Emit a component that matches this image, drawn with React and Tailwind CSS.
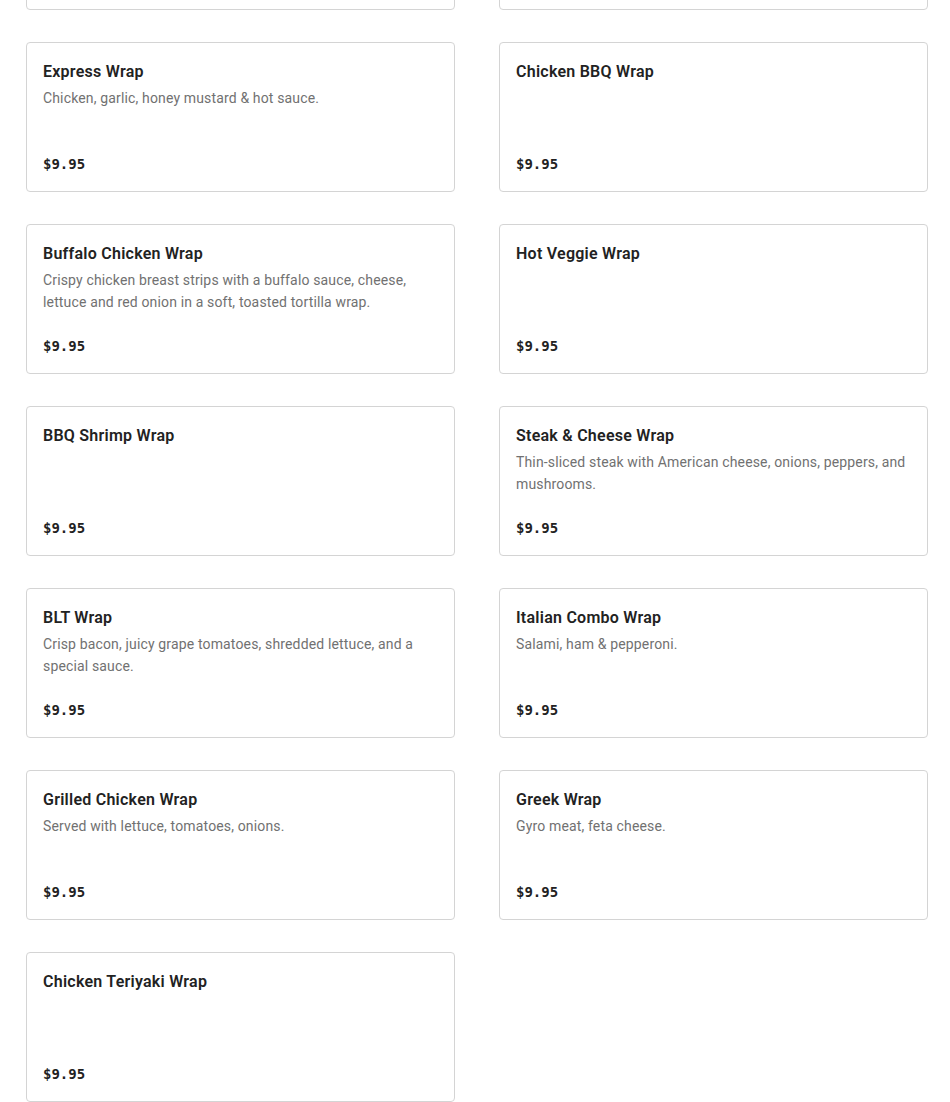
const items = [
  { name: "Express Wrap", desc: "Chicken, garlic, honey mustard & hot sauce." },
  { name: "Chicken BBQ Wrap", desc: "" },
  { name: "Buffalo Chicken Wrap", desc: "Crispy chicken breast strips with a buffalo sauce, cheese, lettuce and red onion in a soft, toasted tortilla wrap." },
  { name: "Hot Veggie Wrap", desc: "" },
  { name: "BBQ Shrimp Wrap", desc: "" },
  { name: "Steak & Cheese Wrap", desc: "Thin-sliced steak with American cheese, onions, peppers, and mushrooms." },
  { name: "BLT Wrap", desc: "Crisp bacon, juicy grape tomatoes, shredded lettuce, and a special sauce." },
  { name: "Italian Combo Wrap", desc: "Salami, ham & pepperoni." },
  { name: "Grilled Chicken Wrap", desc: "Served with lettuce, tomatoes, onions." },
  { name: "Greek Wrap", desc: "Gyro meat, feta cheese." },
  { name: "Chicken Teriyaki Wrap", desc: "" },
];

function Card({ name, desc }) {
  return (
    <div className="flex h-[150px] flex-col rounded-[4px] border border-[#d4d4d4] bg-white px-4 pt-[17px] pb-[17px]">
      <h3 className="text-[16px] leading-6 font-semibold tracking-[0.25px] text-[#222222]">{name}</h3>
      {desc ? (
        <p className="mt-[3px] text-[14px] leading-[22px] tracking-[0.15px] text-[#717171]">{desc}</p>
      ) : null}
      <div className="mt-auto font-['DejaVu_Sans_Mono',monospace] text-[14px] leading-5 font-bold text-[#222222]">
        $9.95
      </div>
    </div>
  );
}

export default function App() {
  return (
    <div className="min-h-[1102px] bg-white font-['Roboto',sans-serif]">
      <div className="grid grid-cols-[429px_429px] gap-x-[44px] gap-y-8 pl-[26px] -mt-[140px]">
        <div className="h-[150px] rounded-[4px] border border-[#d4d4d4]" />
        <div className="h-[150px] rounded-[4px] border border-[#d4d4d4]" />
        {items.map((it) => (
          <Card key={it.name} {...it} />
        ))}
      </div>
    </div>
  );
}
